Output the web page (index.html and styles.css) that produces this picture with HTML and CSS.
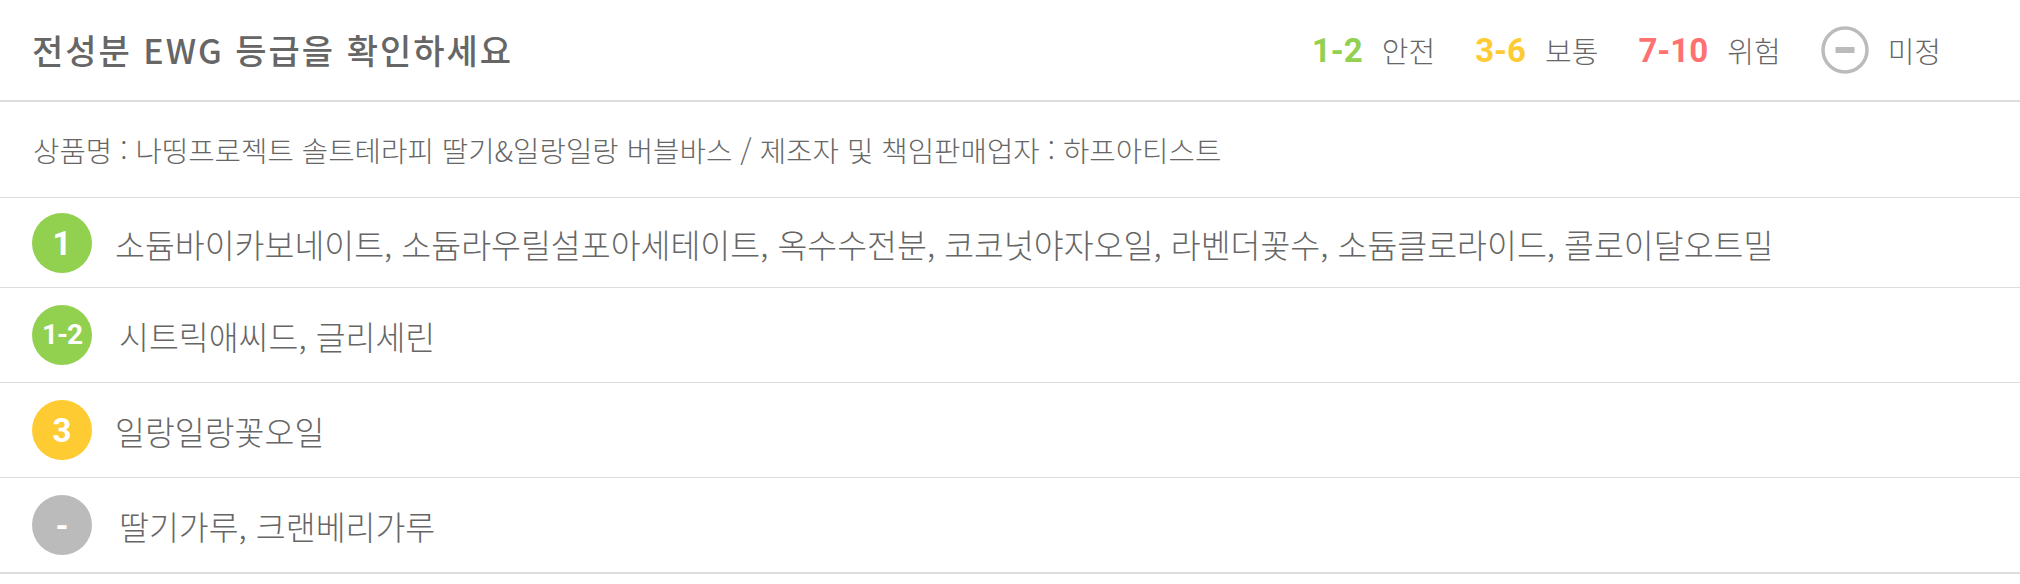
FILE: index.html
```html
<!DOCTYPE html>
<html lang="ko">
<head>
<meta charset="utf-8">
<title>전성분 EWG 등급</title>
<link rel="stylesheet" href="styles.css">
</head>
<body>
<div class="ewg">
  <div class="ewg-header">
    <h2 class="ewg-title">전성분 EWG 등급을 확인하세요</h2>
    <ul class="legend">
      <li class="legend-item"><span class="legend-num green">1-2</span><span class="legend-label">안전</span></li>
      <li class="legend-item"><span class="legend-num yellow">3-6</span><span class="legend-label">보통</span></li>
      <li class="legend-item"><span class="legend-num red">7-10</span><span class="legend-label">위험</span></li>
      <li class="legend-item">
        <svg class="legend-icon" width="48" height="48" viewBox="0 0 48 48" aria-hidden="true">
          <circle cx="24" cy="24" r="22" fill="none" stroke="#bbbbbb" stroke-width="3.5"/>
          <rect x="14.5" y="21" width="19" height="6" fill="#bbbbbb"/>
        </svg>
        <span class="legend-label">미정</span>
      </li>
    </ul>
  </div>
  <div class="ewg-product">상품명 : 나띵프로젝트 솔트테라피 딸기&amp;일랑일랑 버블바스 / 제조자 및 책임판매업자 : 하프아티스트</div>
  <ul class="ewg-list">
    <li class="ewg-row ewg-row--first"><span class="grade green-bg">1</span><span class="names">소듐바이카보네이트, 소듐라우릴설포아세테이트, 옥수수전분, 코코넛야자오일, 라벤더꽃수, 소듐클로라이드, 콜로이달오트밀</span></li>
    <li class="ewg-row"><span class="grade green-bg grade--range">1-2</span><span class="names names--inset">시트릭애씨드, 글리세린</span></li>
    <li class="ewg-row"><span class="grade yellow-bg">3</span><span class="names">일랑일랑꽃오일</span></li>
    <li class="ewg-row ewg-row--last"><span class="grade gray-bg">-</span><span class="names names--inset">딸기가루, 크랜베리가루</span></li>
  </ul>
</div>
</body>
</html>
```

FILE: styles.css
```css
html, body {
  margin: 0;
  padding: 0;
  background: #ffffff;
}

body {
  font-family: "Noto Sans CJK KR", "Noto Sans", sans-serif;
  color: #666666;
}

ul {
  list-style: none;
  margin: 0;
  padding: 0;
}

.ewg-header {
  height: 100px;
  display: flex;
  align-items: center;
  justify-content: space-between;
  padding: 0 79px 0 32px;
  border-bottom: 2px solid #dddddd;
}

.ewg-title {
  margin: 0;
  font-size: 34px;
  font-weight: 500;
  color: #666666;
  letter-spacing: 2px;
  line-height: 1;
}

.legend {
  display: flex;
  align-items: center;
  gap: 40px;
}

.legend-item {
  display: flex;
  align-items: center;
  gap: 19px;
}

.legend-num {
  font-family: "Roboto", "Liberation Sans", sans-serif;
  font-weight: 700;
  font-size: 33px;
  line-height: 1;
}

.legend-label {
  font-size: 29px;
  font-weight: 300;
  color: #666666;
  line-height: 1;
}

.legend-icon {
  display: block;
}

.green { color: #92d050; }
.yellow { color: #ffcb33; }
.red { color: #ff7171; }

.ewg-product {
  height: 95px;
  display: flex;
  align-items: center;
  padding-left: 33px;
  font-size: 28.7px;
  font-weight: 300;
  color: #666666;
  border-bottom: 1px solid #dddddd;
}

.ewg-row {
  display: flex;
  align-items: center;
  gap: 23px;
  padding: 17px 0 17px 32px;
  border-bottom: 1px solid #dddddd;
}

.ewg-row--first {
  padding-top: 15px;
  padding-bottom: 14px;
}

.ewg-row--last {
  border-bottom: 2px solid #dddddd;
}

.grade {
  flex: none;
  width: 60px;
  height: 60px;
  border-radius: 50%;
  display: flex;
  align-items: center;
  justify-content: center;
  font-family: "Roboto", "Liberation Sans", sans-serif;
  font-weight: 700;
  font-size: 33px;
  color: #ffffff;
  line-height: 1;
}

.grade--range {
  font-size: 28px;
  letter-spacing: -1px;
}

.green-bg { background: #92d050; }
.yellow-bg { background: #ffcb33; }
.gray-bg { background: #bbbbbb; }

.names {
  font-size: 32.5px;
  font-weight: 300;
  color: #666666;
  line-height: 1.2;
}

.names--inset {
  padding-left: 4px;
}
```
